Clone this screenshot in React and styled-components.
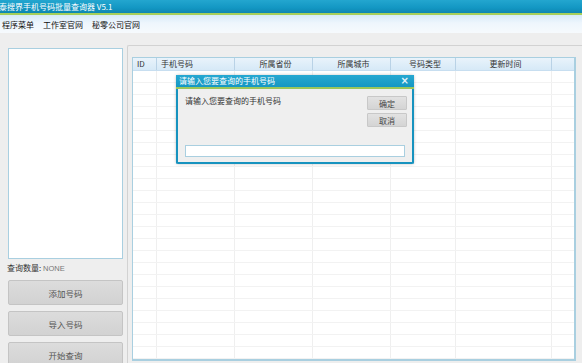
import React from 'react'
import styled, { createGlobalStyle } from 'styled-components'

const GlobalStyle = createGlobalStyle`
  html, body {
    margin: 0;
    padding: 0;
    background: #eeeeee;
    overflow: hidden;
  }
  body {
    font-family: "Noto Sans CJK SC", "Liberation Sans", sans-serif;
    font-size: 9px;
    color: #222;
  }
`;

const columns = [
  { label: 'ID', width: 24, align: 'left' },
  { label: '手机号码', width: 78, align: 'left' },
  { label: '所属省份', width: 78, align: 'center' },
  { label: '所属城市', width: 78, align: 'center' },
  { label: '号码类型', width: 65, align: 'center' },
  { label: '更新时间', width: 96, align: 'center' },
  { label: '', width: 24, align: 'center' },
];

const rows = Array.from({ length: 25 });

function App() {
  return (
    <Window>
      <GlobalStyle />
      <TitleBar>
        <TitleText>泰搜界手机号码批量查询器 V5.1</TitleText>
      </TitleBar>
      <MenuBar>
        <MenuItem>程序菜单</MenuItem>
        <MenuItem>工作室官网</MenuItem>
        <MenuItem>秘零公司官网</MenuItem>
      </MenuBar>
      <Main>
        <LeftColumn>
          <ListBox />
          <CountLabel>
            查询数量: <CountValue>NONE</CountValue>
          </CountLabel>
          <ActionButton>添加号码</ActionButton>
          <ActionButton>导入号码</ActionButton>
          <ActionButton>开始查询</ActionButton>
        </LeftColumn>
        <GroupBox>
          <Table>
            <HeaderRow>
              {columns.map((c, i) => (
                <HeaderCell key={i} $w={c.width} $align={c.align}>
                  {c.label}
                </HeaderCell>
              ))}
            </HeaderRow>
            {rows.map((_, r) => (
              <GridRow key={r}>
                {columns.map((c, i) => (
                  <GridCell key={i} $w={c.width} />
                ))}
              </GridRow>
            ))}
          </Table>
        </GroupBox>
        <Dialog>
          <DialogTitle>
            <span>请输入您要查询的手机号码</span>
            <CloseMark>×</CloseMark>
          </DialogTitle>
          <DialogBody>
            <DialogTop>
              <Prompt>请输入您要查询的手机号码</Prompt>
              <DialogButtons>
                <SmallButton>确定</SmallButton>
                <SmallButton>取消</SmallButton>
              </DialogButtons>
            </DialogTop>
            <InputBox />
          </DialogBody>
        </Dialog>
      </Main>
    </Window>
  )
}

export default App

const Window = styled.div`
width: 582px;
height: 363px;
display: flex;
flex-direction: column;
background: #eeeeee;
overflow: hidden;
`;

const TitleBar = styled.div`
height: 13px;
flex-shrink: 0;
background: linear-gradient(to bottom, #23a6cf 0%, #1397c3 60%, #0d86b0 100%);
border-bottom: 2px solid #a6cf5a;
display: flex;
align-items: center;
`;

const TitleText = styled.div`
color: #ffffff;
font-size: 8px;
line-height: 13px;
margin-left: -1px;
white-space: nowrap;
`;

const MenuBar = styled.div`
height: 18px;
flex-shrink: 0;
background: linear-gradient(to bottom, #d6eaf8 0%, #eef6fd 45%, #f6fafd 100%);
display: flex;
align-items: center;
padding-left: 2px;
gap: 9px;
`;

const MenuItem = styled.span`
font-size: 8px;
color: #111;
`;

const Main = styled.div`
flex: 1;
position: relative;
display: flex;
align-items: flex-start;
padding-left: 8px;
`;

const LeftColumn = styled.div`
width: 115px;
padding-top: 15px;
display: flex;
flex-direction: column;
`;

const ListBox = styled.div`
height: 209px;
background: #ffffff;
border: 1px solid #a9cfe0;
`;

const CountLabel = styled.div`
margin-top: 2px;
height: 13px;
line-height: 13px;
font-size: 8px;
color: #333;
margin-left: -1px;
`;

const CountValue = styled.span`
color: #777;
font-family: "Liberation Sans", sans-serif;
font-size: 7.5px;
`;

const ActionButton = styled.div`
margin-top: 6px;
height: 23px;
border: 1px solid #c4c4c4;
border-radius: 2px;
background: linear-gradient(to bottom, #dcdcdc 0%, #d2d2d2 100%);
display: flex;
align-items: center;
justify-content: center;
color: #555;
font-size: 8.5px;
&:first-of-type {
  margin-top: 4px;
}
`;

const GroupBox = styled.div`
margin-left: 4px;
margin-top: 12px;
flex: 1;
height: 330px;
border: 1px solid #d2d2d2;
border-right: none;
border-radius: 2px 0 0 0;
padding: 11px 4px 0 4px;
display: flex;
flex-direction: column;
`;

const Table = styled.div`
width: 441px;
height: 301px;
background: #ffffff;
border: 1px solid #a9cfe0;
border-width: 1px 2px 2px 1px;
overflow: hidden;
`;

const HeaderRow = styled.div`
height: 12px;
display: flex;
background: linear-gradient(to bottom, #e9f3fb 0%, #d6e9f7 100%);
border-bottom: 1px solid #c7def0;
`;

const HeaderCell = styled.div`
width: ${p => p.$w}px;
flex-shrink: 0;
box-sizing: border-box;
border-right: 1px solid #b9d2e6;
padding-left: 4px;
text-align: ${p => p.$align};
font-size: 8px;
line-height: 12px;
color: #333;
white-space: nowrap;
&:last-child {
  border-right: none;
}
`;

const GridRow = styled.div`
height: 12px;
display: flex;
box-sizing: border-box;
border-bottom: 1px solid #f2f2f2;
`;

const GridCell = styled.div`
width: ${p => p.$w}px;
flex-shrink: 0;
box-sizing: border-box;
border-right: 1px solid #efefef;
&:last-child {
  border-right: none;
}
`;

const Dialog = styled.div`
position: absolute;
left: 176px;
top: 42px;
width: 234px;
height: 87px;
border: 2px solid #1793bf;
border-top: none;
border-radius: 2px;
background: #efefef;
display: flex;
flex-direction: column;
box-shadow: 0 0 3px rgba(0, 0, 0, 0.25);
`;

const DialogTitle = styled.div`
height: 12px;
background: linear-gradient(to bottom, #27a8d1 0%, #1597c3 100%);
border-bottom: 2px solid #9cc65a;
display: flex;
align-items: center;
justify-content: space-between;
padding: 0 5px 0 3px;
color: #ffffff;
font-size: 8px;
line-height: 12px;
margin: 0 -2px;
`;

const CloseMark = styled.span`
font-family: "DejaVu Sans", sans-serif;
font-size: 10px;
font-weight: bold;
color: #e8f4fa;
`;

const DialogBody = styled.div`
flex: 1;
display: flex;
flex-direction: column;
padding: 6px 5px 0 7px;
`;

const DialogTop = styled.div`
display: flex;
justify-content: space-between;
align-items: flex-start;
height: 50px;
`;

const Prompt = styled.div`
font-size: 8px;
color: #333;
line-height: 12px;
`;

const DialogButtons = styled.div`
display: flex;
flex-direction: column;
gap: 3px;
padding-top: 1px;
`;

const SmallButton = styled.div`
width: 38px;
height: 12px;
border: 1px solid #c8c8c8;
border-radius: 1px;
background: linear-gradient(to bottom, #e2e2e2 0%, #d4d4d4 100%);
display: flex;
align-items: center;
justify-content: center;
font-size: 8px;
color: #444;
`;

const InputBox = styled.div`
width: 218px;
height: 10px;
background: #ffffff;
border: 1px solid #a9cfe0;
`;
